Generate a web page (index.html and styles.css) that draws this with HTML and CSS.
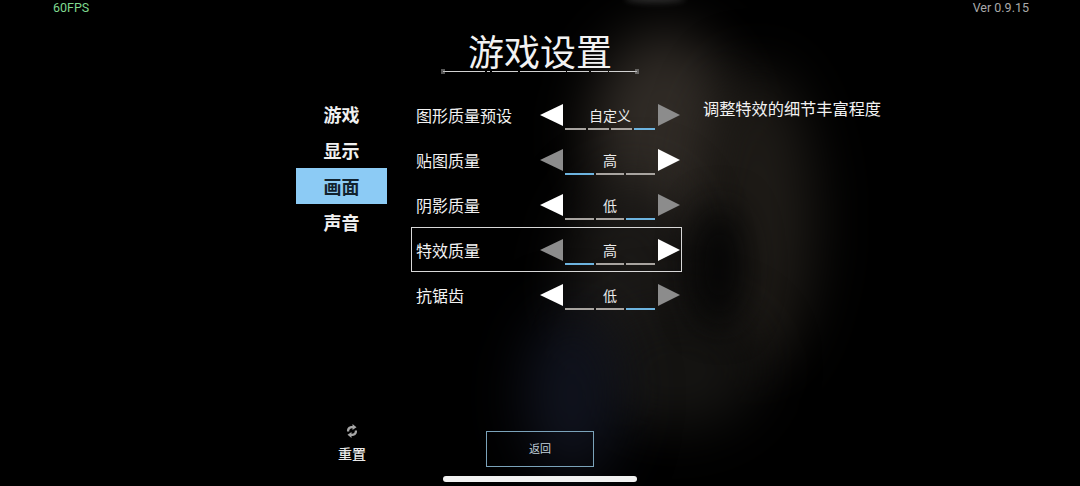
FILE: index.html
```html
<!DOCTYPE html>
<html>
<head>
    <title>游戏设置</title>
    <link rel="stylesheet" href="styles.css">
</head>
<body>
    <div class="screen">
        <div class="backdrop">
            <div class="blob blob-top"></div>
            <div class="blob blob-head"></div>
            <div class="blob blob-shoulder"></div>
            <div class="blob blob-torso"></div>
            <div class="blob blob-legs"></div>
            <div class="blob blob-blue"></div>
            <div class="blob blob-dark"></div>
        </div>

        <div class="topbar">
            <span class="fps">60FPS</span>
            <span class="version">Ver 0.9.15</span>
        </div>

        <div class="title-wrap">
            <h1>游戏设置</h1>
            <svg class="title-line" width="200" height="8" viewBox="0 0 200 8">
                <path d="M3 3.5H197" stroke="#d2d2d2" stroke-width="1" stroke-dasharray="42 2 3 2 26 2 46 1 22 2 17 1 60 0"/>
                <path d="M2 1V6M4 1V6M196 1V6M198 1V6" stroke="#a8a8a8" stroke-width="1"/>
            </svg>
        </div>

        <div class="main">
            <ul class="menu">
                <li>游戏</li>
                <li>显示</li>
                <li class="active">画面</li>
                <li>声音</li>
            </ul>

            <div class="options">
                <div class="row">
                    <span class="label">图形质量预设</span>
                    <div class="picker">
                        <span class="arrow left"></span>
                        <div class="value">
                            <span class="value-text">自定义</span>
                            <div class="bars"><i></i><i></i><i></i><i class="on"></i></div>
                        </div>
                        <span class="arrow right off"></span>
                    </div>
                </div>
                <div class="row">
                    <span class="label">贴图质量</span>
                    <div class="picker">
                        <span class="arrow left off"></span>
                        <div class="value">
                            <span class="value-text">高</span>
                            <div class="bars"><i class="on"></i><i></i><i></i></div>
                        </div>
                        <span class="arrow right"></span>
                    </div>
                </div>
                <div class="row">
                    <span class="label">阴影质量</span>
                    <div class="picker">
                        <span class="arrow left"></span>
                        <div class="value">
                            <span class="value-text">低</span>
                            <div class="bars"><i></i><i></i><i class="on"></i></div>
                        </div>
                        <span class="arrow right off"></span>
                    </div>
                </div>
                <div class="row selected">
                    <span class="label">特效质量</span>
                    <div class="picker">
                        <span class="arrow left off"></span>
                        <div class="value">
                            <span class="value-text">高</span>
                            <div class="bars"><i class="on"></i><i></i><i></i></div>
                        </div>
                        <span class="arrow right"></span>
                    </div>
                </div>
                <div class="row">
                    <span class="label">抗锯齿</span>
                    <div class="picker">
                        <span class="arrow left"></span>
                        <div class="value">
                            <span class="value-text">低</span>
                            <div class="bars"><i></i><i></i><i class="on"></i></div>
                        </div>
                        <span class="arrow right off"></span>
                    </div>
                </div>
            </div>

            <p class="hint">调整特效的细节丰富程度</p>
        </div>

        <div class="footer">
            <div class="reset">
                <svg width="14" height="16" viewBox="0 0 14 16">
                    <path d="M2 8.5C1.6 5 4 2.8 7.5 3V1L11.5 4.2L7.5 7V5.2C5.5 5 4 6.3 4.2 8.5Z" fill="#a6a6a6"/>
                    <path d="M12 7.5C12.4 11 10 13.2 6.5 13V15L2.5 11.8L6.5 9V10.8C8.5 11 10 9.7 9.8 7.5Z" fill="#a6a6a6"/>
                </svg>
                <span>重置</span>
            </div>
            <div class="back-btn">返回</div>
        </div>

        <div class="home-bar"></div>
    </div>
</body>
</html>
```

FILE: styles.css
```css
* {
    box-sizing: border-box;
}

html, body {
    margin: 0;
    background: #000;
}

.screen {
    position: relative;
    width: 1080px;
    height: 486px;
    overflow: hidden;
    background: #000;
    color: #f0f0f0;
    font-family: "Noto Sans CJK SC", "Noto Sans", sans-serif;
}

.backdrop {
    position: absolute;
    inset: 0;
}

.blob {
    position: absolute;
    border-radius: 50%;
    filter: blur(28px);
}

.blob-top {
    left: 625px;
    top: -6px;
    width: 60px;
    height: 9px;
    background: #2a2a2a;
    filter: blur(3px);
}

.blob-head {
    left: 590px;
    top: 30px;
    width: 150px;
    height: 210px;
    background: #302b26;
}

.blob-shoulder {
    left: 700px;
    top: 70px;
    width: 115px;
    height: 300px;
    background: #1e1b17;
}

.blob-torso {
    left: 565px;
    top: 180px;
    width: 130px;
    height: 210px;
    background: #1b1917;
}

.blob-legs {
    left: 590px;
    top: 310px;
    width: 170px;
    height: 120px;
    background: #151412;
}

.blob-blue {
    left: 525px;
    top: 310px;
    width: 95px;
    height: 170px;
    background: #10131e;
}

.blob-dark {
    left: 695px;
    top: 205px;
    width: 50px;
    height: 120px;
    background: #050505;
    filter: blur(18px);
}

.topbar {
    position: relative;
    display: flex;
    justify-content: space-between;
    height: 14px;
    padding: 0 51px 0 53px;
    font-family: Roboto, sans-serif;
    font-size: 12.5px;
}

.fps {
    color: #7fd98f;
}

.version {
    color: #a9a9a9;
}

.title-wrap {
    position: relative;
    display: flex;
    flex-direction: column;
    align-items: center;
    height: 64px;
    padding-top: 13px;
}

h1 {
    margin: 0;
    font-size: 36px;
    font-weight: 400;
    line-height: 46px;
    color: #f2f2f2;
}

.title-line {
    margin-top: -5px;
}

.main {
    position: relative;
    display: flex;
    align-items: flex-start;
    height: 345px;
    padding: 14px 0 0 296px;
}

.menu {
    list-style: none;
    width: 91px;
    margin: 4px 24px 0 0;
    padding: 0;
}

.menu li {
    height: 36px;
    font-size: 18px;
    font-weight: 700;
    line-height: 36px;
    text-align: center;
    color: #f0f0f0;
}

.menu li.active {
    background: #8ccbf5;
    color: #12222e;
}

.options {
    width: 271px;
}

.row {
    display: flex;
    align-items: center;
    justify-content: space-between;
    height: 45px;
    padding: 0 0 0 4px;
    border: 1px solid transparent;
}

.row.selected {
    border: 1.5px solid #d8d8d8;
}

.label {
    font-size: 16px;
    color: #f2f2f2;
}

.picker {
    display: flex;
    align-items: center;
    padding-right: 1px;
}

.arrow {
    width: 0;
    height: 0;
    border-top: 11.5px solid transparent;
    border-bottom: 11.5px solid transparent;
}

.arrow.left {
    border-right: 23px solid #fff;
}

.arrow.right {
    border-left: 22px solid #fff;
}

.arrow.left.off {
    border-right-color: #8c8c8c;
}

.arrow.right.off {
    border-left-color: #8c8c8c;
}

.value {
    width: 95px;
    height: 36px;
    padding: 0 3px 0 2px;
    display: flex;
    flex-direction: column;
    justify-content: flex-end;
    align-items: stretch;
}

.value-text {
    font-size: 14px;
    line-height: 20px;
    text-align: center;
    color: #ececec;
    margin-bottom: 3px;
}

.bars {
    display: flex;
    gap: 2px;
    margin-bottom: 3px;
}

.bars i {
    flex: 1;
    height: 2px;
    background: #a8a4a0;
}

.bars i.on {
    background: #6db4e0;
}

.hint {
    margin: 4px 0 0 21px;
    font-size: 16.2px;
    line-height: 24px;
    color: #f2f2f2;
}

.footer {
    position: relative;
    display: flex;
    align-items: flex-start;
    padding-left: 322px;
}

.reset {
    display: flex;
    flex-direction: column;
    align-items: center;
    width: 60px;
    font-size: 14px;
    font-weight: 500;
    line-height: 20px;
    color: #e8e8e8;
}

.reset svg {
    margin-bottom: 4px;
}

.back-btn {
    width: 108px;
    height: 36px;
    margin: 8px 0 0 104px;
    border: 1.5px solid #7ba3ba;
    font-size: 11px;
    line-height: 33px;
    text-align: center;
    color: #c2d2dc;
}

.home-bar {
    position: absolute;
    left: 443px;
    bottom: 4px;
    width: 194px;
    height: 6px;
    border-radius: 3px;
    background: #f2f2f2;
}
```
